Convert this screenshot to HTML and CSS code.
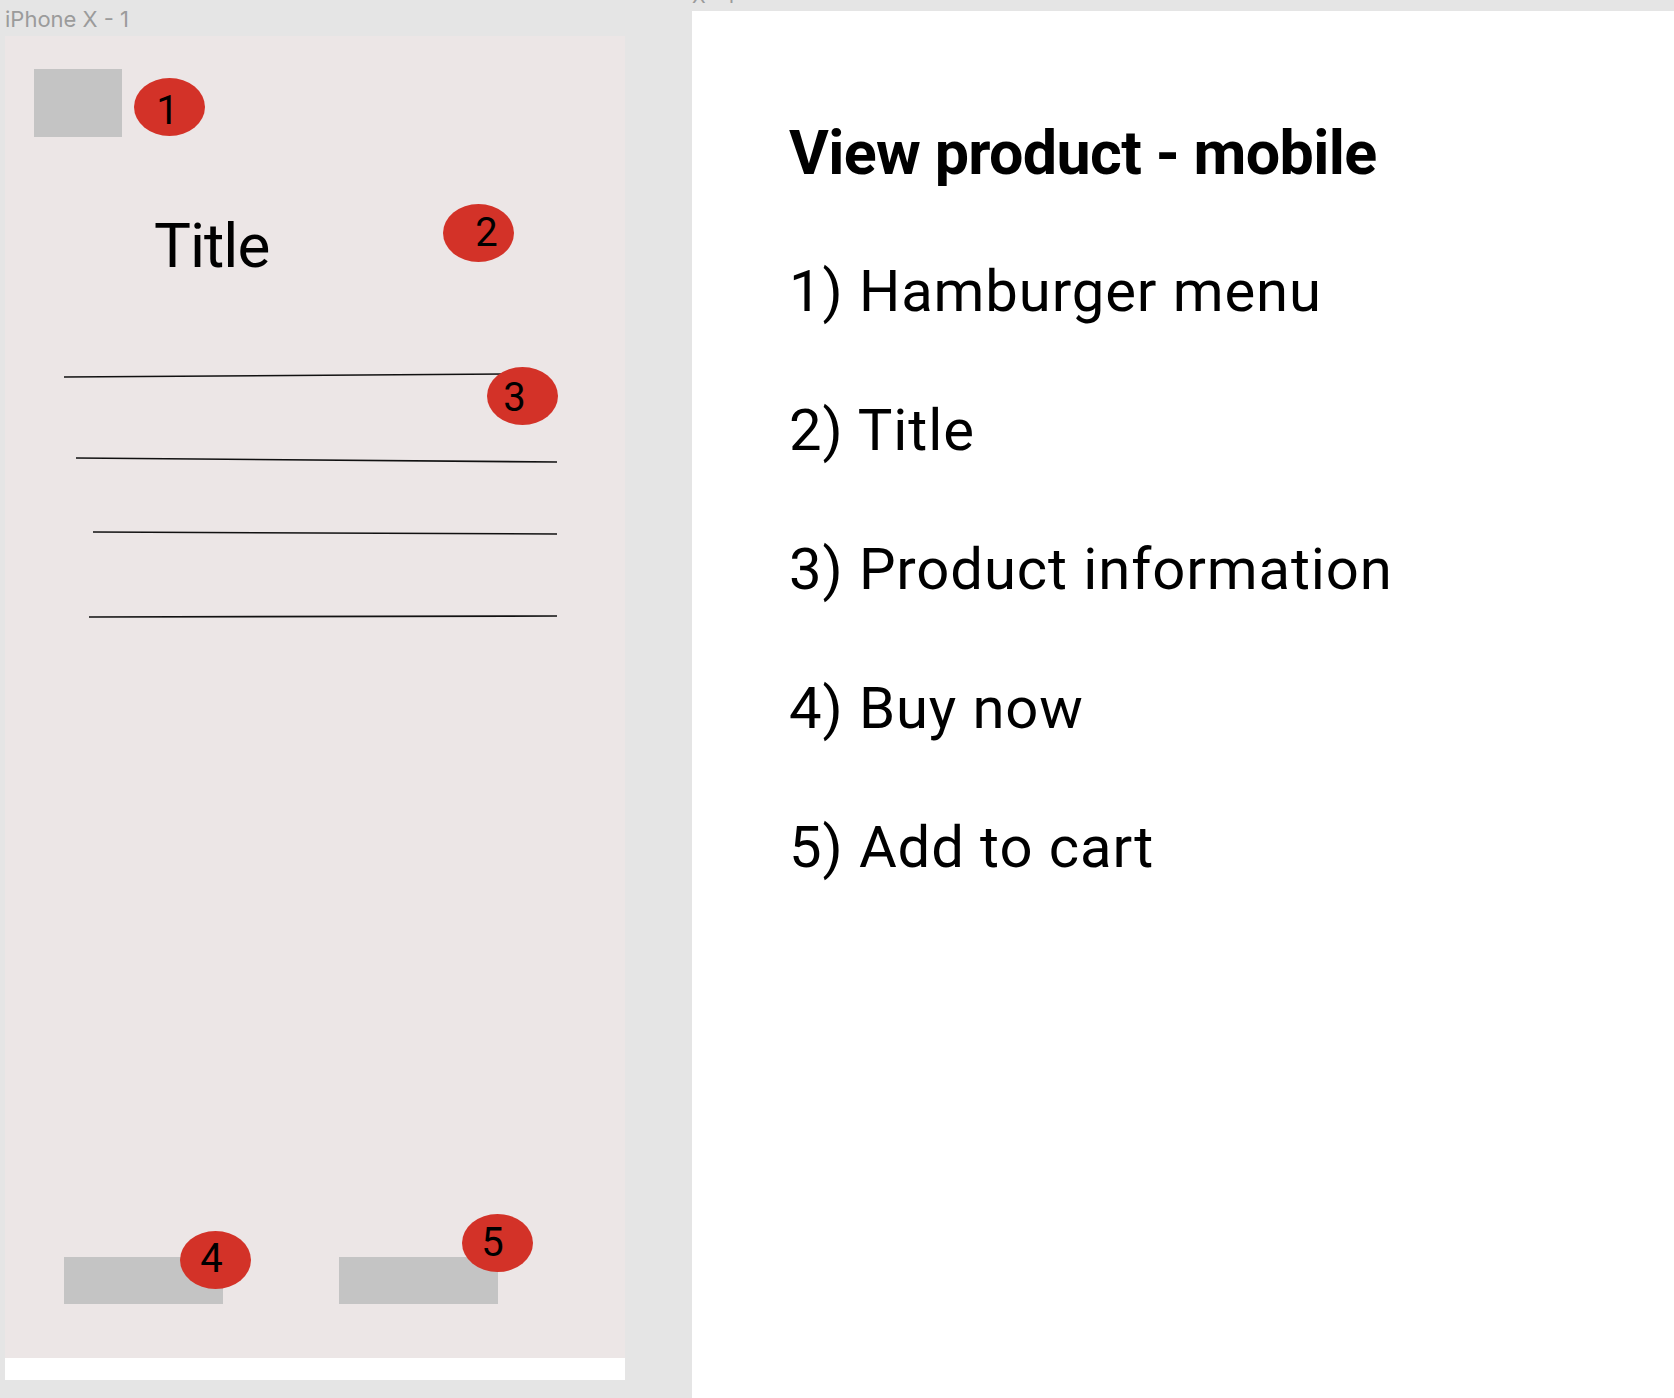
FILE: index.html
```html
<!DOCTYPE html>
<html lang="en">
<head>
<meta charset="utf-8">
<title>View product - mobile</title>
<link rel="stylesheet" href="styles.css">
</head>
<body>
<div class="canvas">
  <section class="board-col">
    <div class="board-label">iPhone X - 1</div>
    <div class="phone">
      <div class="phone-screen">
        <div class="menu-box"></div>
        <div class="title">Title</div>
        <svg class="info-lines" width="620" height="270" viewBox="0 0 620 270">
          <line x1="59" y1="17" x2="500" y2="14"/>
          <line x1="71" y1="98" x2="552" y2="102"/>
          <line x1="88" y1="172" x2="552" y2="174"/>
          <line x1="84" y1="257" x2="552" y2="256"/>
        </svg>
        <div class="actions">
          <div class="btn"></div>
          <div class="btn"></div>
        </div>
      </div>
      <div class="home-strip"></div>
      <span class="badge b1">1</span>
      <span class="badge b2">2</span>
      <span class="badge b3">3</span>
      <span class="badge b4">4</span>
      <span class="badge b5">5</span>
    </div>
  </section>
  <section class="notes-col">
    <div class="board-label notes-label">X - 1</div>
    <div class="notes">
      <h1 class="notes-title">View product - mobile</h1>
      <ol class="notes-list">
        <li>1) Hamburger menu</li>
        <li>2) Title</li>
        <li>3) Product information</li>
        <li>4) Buy now</li>
        <li>5) Add to cart</li>
      </ol>
    </div>
  </section>
</div>
</body>
</html>
```
FILE: styles.css
```css
html, body {
  margin: 0;
  padding: 0;
}
body {
  width: 1674px;
  height: 1398px;
  overflow: hidden;
  background: #e5e5e5;
  font-family: Roboto, "Liberation Sans", sans-serif;
  color: #000;
}
.canvas {
  display: flex;
  height: 1398px;
}
.board-col {
  width: 692px;
  flex: none;
  display: flex;
  flex-direction: column;
}
.board-label {
  font-family: Inter, Roboto, sans-serif;
  font-size: 22px;
  line-height: 33px;
  padding-top: 3px;
  padding-left: 5px;
  color: #9b9b9b;
  white-space: nowrap;
}
.phone {
  position: relative;
  margin-left: 5px;
  width: 620px;
  display: flex;
  flex-direction: column;
}
.phone-screen {
  height: 1322px;
  background: #ece6e6;
  display: flex;
  flex-direction: column;
}
.home-strip {
  height: 22px;
  background: #ffffff;
}
.menu-box {
  margin: 33px 0 0 29px;
  width: 88px;
  height: 68px;
  background: #c4c4c4;
}
.title {
  margin: 77px 0 0 149px;
  font-size: 62px;
  line-height: 63px;
  height: 63px;
  letter-spacing: -1px;
}
.info-lines {
  display: block;
  margin-top: 83px;
}
.info-lines line {
  stroke: #111;
  stroke-width: 1.6;
}
.actions {
  margin-top: auto;
  margin-bottom: 54px;
  margin-left: 59px;
  display: flex;
  gap: 116px;
}
.btn {
  width: 159px;
  height: 47px;
  background: #c4c4c4;
}
.badge {
  position: absolute;
  width: 71px;
  height: 58px;
  border-radius: 50%;
  background: #d33228;
  color: #000;
  font-size: 40px;
  line-height: 58px;
  text-align: center;
  text-indent: -10px;
}
.b1 { left: 129px; top: 42px; line-height: 66px; text-indent: -4px; }
.b2 { left: 438px; top: 168px; text-indent: 16px; }
.b3 { left: 482px; top: 331px; line-height: 61px; text-indent: -16px; }
.b4 { left: 175px; top: 1195px; line-height: 55px; text-indent: -8px; }
.b5 { left: 457px; top: 1178px; }

.notes-col {
  flex: 1;
  display: flex;
  flex-direction: column;
  min-width: 0;
}
.notes-label {
  margin-top: -19px;
  line-height: 30px;
  padding: 0;
  height: 30px;
  font-size: 20px;
}
.notes {
  flex: 1;
  background: #ffffff;
  padding: 112px 0 0 97px;
}
.notes-title {
  margin: 0;
  font-size: 61px;
  line-height: 60px;
  font-weight: 700;
  letter-spacing: -0.65px;
}
.notes-list {
  list-style: none;
  margin: 39px 0 0 0;
  padding: 0;
  font-size: 58px;
  line-height: 139px;
  letter-spacing: 0.9px;
}
.notes-list li {
  margin: 0;
  padding: 0;
}
```
